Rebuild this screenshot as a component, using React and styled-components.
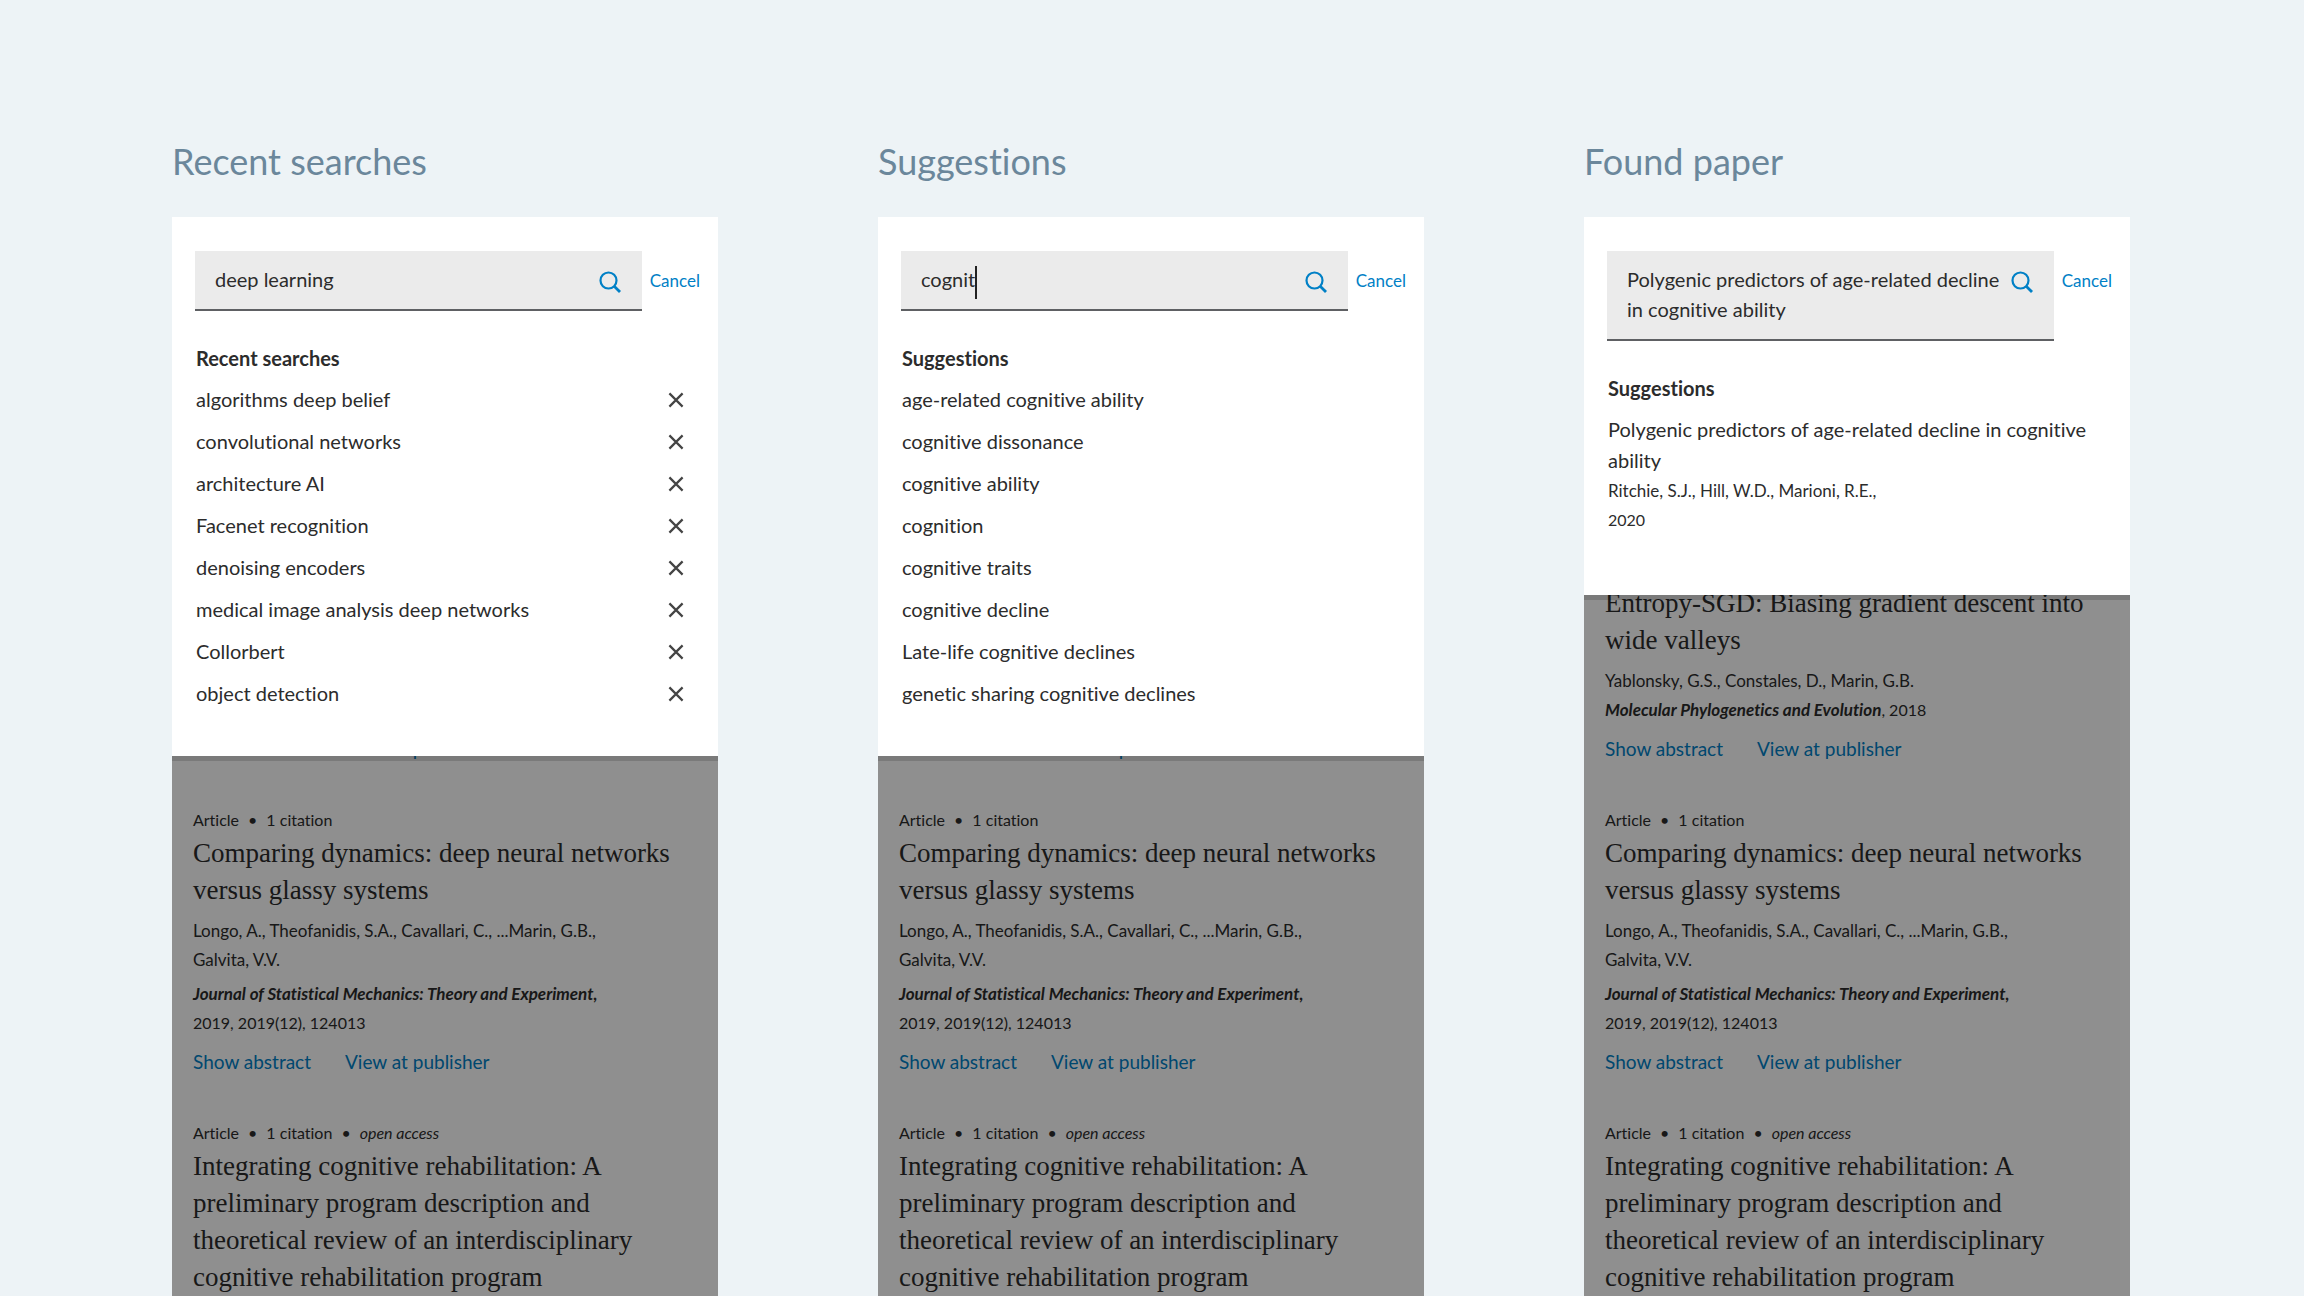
import React from "react";
import styled, { createGlobalStyle } from "styled-components";

const sans = `Lato, "Open Sans", sans-serif`;
const serif = `"Liberation Serif", "Times New Roman", serif`;
const ink = "#2c2c2c";
const link = "#0080c6";

const GlobalStyle = createGlobalStyle`
  *, *::before, *::after { box-sizing: border-box; }
  body {
    margin: 0;
    background: #edf3f6;
    color: ${ink};
    font-family: ${sans};
    font-variant-ligatures: none;
  }
  h2, h3, h4, p, ul { margin: 0; padding: 0; }
  ul { list-style: none; }
  button, input, textarea { font: inherit; font-variant-ligatures: none; color: inherit; }
`;

const Page = styled.main`
  display: grid;
  grid-template-columns: repeat(3, minmax(0, 1fr));
  column-gap: 160px;
  height: 100vh;
  padding: 139px 174px 0 172px;
  overflow: hidden;
`;

const Column = styled.section`
  display: flex;
  flex-direction: column;
  min-height: 0;
`;

const ColumnTitle = styled.h2`
  margin-bottom: 34px;
  color: #6b879b;
  font-size: 36px;
  font-weight: 400;
  line-height: 44px;
`;

const Sheet = styled.div`
  position: relative;
  z-index: 1;
  padding: 34px 0 41px;
  background: #fff;
  box-shadow: 0 5px 0 rgba(0, 0, 0, 0.14);
`;

const SearchForm = styled.form`
  display: flex;
  align-items: flex-start;
  gap: 8px;
  padding: 0 18px 0 23px;
`;

const Field = styled.div`
  display: flex;
  flex: 1;
  align-items: flex-start;
  min-width: 0;
  padding: 13px 21px 15px 20px;
  background: #ebebeb;
  border-bottom: 2px solid #5e6063;
`;

const TextInput = styled.input`
  flex: ${(p) => (p.$hug ? "none" : "1")};
  field-sizing: ${(p) => (p.$hug ? "content" : "fixed")};
  min-width: 0;
  height: 30px;
  padding: 0;
  border: 0;
  outline: 0;
  background: none;
  font-size: 20px;
  line-height: 30px;
`;

const TextArea = styled.textarea`
  flex: 1;
  min-width: 0;
  height: 60px;
  padding: 0;
  border: 0;
  outline: 0;
  resize: none;
  overflow: hidden;
  background: none;
  font-size: 20px;
  line-height: 30px;
`;

const Caret = styled.span`
  width: 2px;
  height: 33px;
  margin: 2px 0 -5px;
  background: #222;
`;

const IconButton = styled.button`
  display: flex;
  flex: none;
  align-items: center;
  justify-content: center;
  padding: 0;
  border: 0;
  background: none;
  color: #444;
  cursor: pointer;
`;

const SearchButton = styled(IconButton)`
  height: 30px;
  margin-left: auto;
  padding-top: 5px;
  color: ${link};
`;

const CancelButton = styled.button`
  padding: 15px 0 0;
  border: 0;
  background: none;
  color: ${link};
  font-size: 17px;
  line-height: 30px;
  cursor: pointer;
`;

const ListArea = styled.div`
  padding: 26px 34px 0 24px;
`;

const ListTitle = styled.h3`
  font-size: 20px;
  font-weight: 700;
  line-height: 42px;
`;

const Entry = styled.li`
  display: flex;
  align-items: center;
  justify-content: space-between;
  padding: 5px 0 6px;
  font-size: 20px;
  line-height: 31px;
`;

const PaperEntry = styled.li`
  padding: 5px 0 20px;
`;

const PaperTitle = styled.p`
  font-size: 20px;
  line-height: 31px;
`;

const Dimmed = styled.div`
  position: relative;
  flex: 1;
  min-height: 0;
  overflow: hidden;
  background: #fff;

  &::after {
    content: "";
    position: absolute;
    inset: 0;
    background: rgba(0, 0, 0, 0.44);
    pointer-events: none;
  }
`;

const Results = styled.div`
  display: flex;
  flex-direction: column;
  gap: 42px;
  margin-top: ${(p) => -p.$scrolled}px;
  padding: 0 21px;
`;

const Meta = styled.p`
  display: flex;
  gap: 9px;
  font-size: 16px;
  line-height: 30px;
`;

const ArticleTitle = styled.h4`
  font-family: ${serif};
  font-size: 27px;
  font-weight: 400;
  line-height: 37px;
`;

const Authors = styled.p`
  max-width: 440px;
  margin-top: ${(p) => (p.$flush ? "0" : "7px")};
  font-size: 17px;
  line-height: 29px;
`;

const Source = styled.p`
  max-width: 440px;
  margin-top: ${(p) => (p.$tight ? "0" : "5px")};
  font-size: 16px;
  line-height: 29px;
`;

const Journal = styled.em`
  font-size: 17px;
  font-weight: 700;
`;

const Year = styled.p`
  font-size: 16px;
  line-height: 29px;
`;

const Links = styled.nav`
  display: flex;
  gap: 34px;
  font-size: 19px;
  line-height: 29px;

  * + & {
    margin-top: 10px;
  }
`;

const Link = styled.a`
  color: ${link};
  text-decoration: none;
`;

const SearchIcon = () => (
  <svg width="22" height="22" viewBox="0 0 22 22" fill="none" stroke="currentColor" strokeWidth="2.2" aria-hidden="true">
    <circle cx="9.5" cy="9.5" r="8" />
    <path d="M15.2 15.2L21 21" strokeWidth="2.8" />
  </svg>
);

const CloseIcon = () => (
  <svg width="16" height="16" viewBox="0 0 16 16" fill="none" stroke="currentColor" strokeWidth="2.2" aria-hidden="true">
    <path d="M1.4 1.4L14.6 14.6M14.6 1.4L1.4 14.6" />
  </svg>
);

const entropy = {
  id: "entropy",
  title: "Entropy-SGD: Biasing gradient descent into wide valleys",
  authors: "Yablonsky, G.S., Constales, D., Marin, G.B.",
  journal: "Molecular Phylogenetics and Evolution",
  issue: ", 2018",
  tight: true,
  links: true,
};

const scrolledPast = { id: "scrolled", links: true };

const articles = [
  {
    id: "dynamics",
    meta: ["Article", "1 citation"],
    title: "Comparing dynamics: deep neural networks versus glassy systems",
    authors: "Longo, A., Theofanidis, S.A., Cavallari, C., ...Marin, G.B., Galvita, V.V.",
    journal: "Journal of Statistical Mechanics: Theory and Experiment,",
    issue: " 2019, 2019(12), 124013",
    links: true,
  },
  {
    id: "rehabilitation",
    meta: ["Article", "1 citation"],
    openAccess: true,
    title:
      "Integrating cognitive rehabilitation: A preliminary program description and theoretical review of an interdisciplinary cognitive rehabilitation program",
  },
];

const recent = [
  "algorithms deep belief",
  "convolutional networks",
  "architecture AI",
  "Facenet recognition",
  "denoising encoders",
  "medical image analysis deep networks",
  "Collorbert",
  "object detection",
];

const suggestions = [
  "age-related cognitive ability",
  "cognitive dissonance",
  "cognitive ability",
  "cognition",
  "cognitive traits",
  "cognitive decline",
  "Late-life cognitive declines",
  "genetic sharing cognitive declines",
];

function Article({ meta, openAccess, title, authors, journal, issue, tight, links }) {
  return (
    <article>
      {meta && (
        <Meta>
          <span>{meta[0]}</span>
          <span>•</span>
          <span>{meta[1]}</span>
          {openAccess && <span>•</span>}
          {openAccess && <em>open access</em>}
        </Meta>
      )}
      {title && <ArticleTitle>{title}</ArticleTitle>}
      {authors && <Authors>{authors}</Authors>}
      {journal && (
        <Source $tight={tight}>
          <Journal>{journal}</Journal>
          {issue}
        </Source>
      )}
      {links && (
        <Links>
          <Link href="#abstract">Show abstract</Link>
          <Link href="#publisher">View at publisher</Link>
        </Links>
      )}
    </article>
  );
}

function SearchScreen({ title, field, listTitle, first, scrolled, children }) {
  return (
    <Column>
      <ColumnTitle>{title}</ColumnTitle>
      <Sheet>
        <SearchForm onSubmit={(e) => e.preventDefault()}>
          <Field>
            {field}
            <SearchButton type="submit" aria-label="Search">
              <SearchIcon />
            </SearchButton>
          </Field>
          <CancelButton type="button">Cancel</CancelButton>
        </SearchForm>
        <ListArea>
          <ListTitle>{listTitle}</ListTitle>
          <ul>{children}</ul>
        </ListArea>
      </Sheet>
      <Dimmed>
        <Results $scrolled={scrolled}>
          {[first, ...articles].map(({ id, ...article }) => (
            <Article key={id} {...article} />
          ))}
        </Results>
      </Dimmed>
    </Column>
  );
}

export default function App() {
  return (
    <>
      <GlobalStyle />
      <Page>
        <SearchScreen
          title="Recent searches"
          listTitle="Recent searches"
          first={scrolledPast}
          scrolled={22}
          field={<TextInput type="text" aria-label="Search" defaultValue="deep learning" />}
        >
          {recent.map((text) => (
            <Entry key={text}>
              {text}
              <IconButton type="button" aria-label={`Remove ${text}`}>
                <CloseIcon />
              </IconButton>
            </Entry>
          ))}
        </SearchScreen>

        <SearchScreen
          title="Suggestions"
          listTitle="Suggestions"
          first={scrolledPast}
          scrolled={22}
          field={
            <>
              <TextInput $hug type="text" aria-label="Search" defaultValue="cognit" />
              <Caret />
            </>
          }
        >
          {suggestions.map((text) => (
            <Entry key={text}>{text}</Entry>
          ))}
        </SearchScreen>

        <SearchScreen
          title="Found paper"
          listTitle="Suggestions"
          first={entropy}
          scrolled={10}
          field={
            <TextArea
              aria-label="Search"
              defaultValue="Polygenic predictors of age-related decline in cognitive ability"
            />
          }
        >
          <PaperEntry>
            <PaperTitle>Polygenic predictors of age-related decline in cognitive ability</PaperTitle>
            <Authors $flush>Ritchie, S.J., Hill, W.D., Marioni, R.E.,</Authors>
            <Year>2020</Year>
          </PaperEntry>
        </SearchScreen>
      </Page>
    </>
  );
}
